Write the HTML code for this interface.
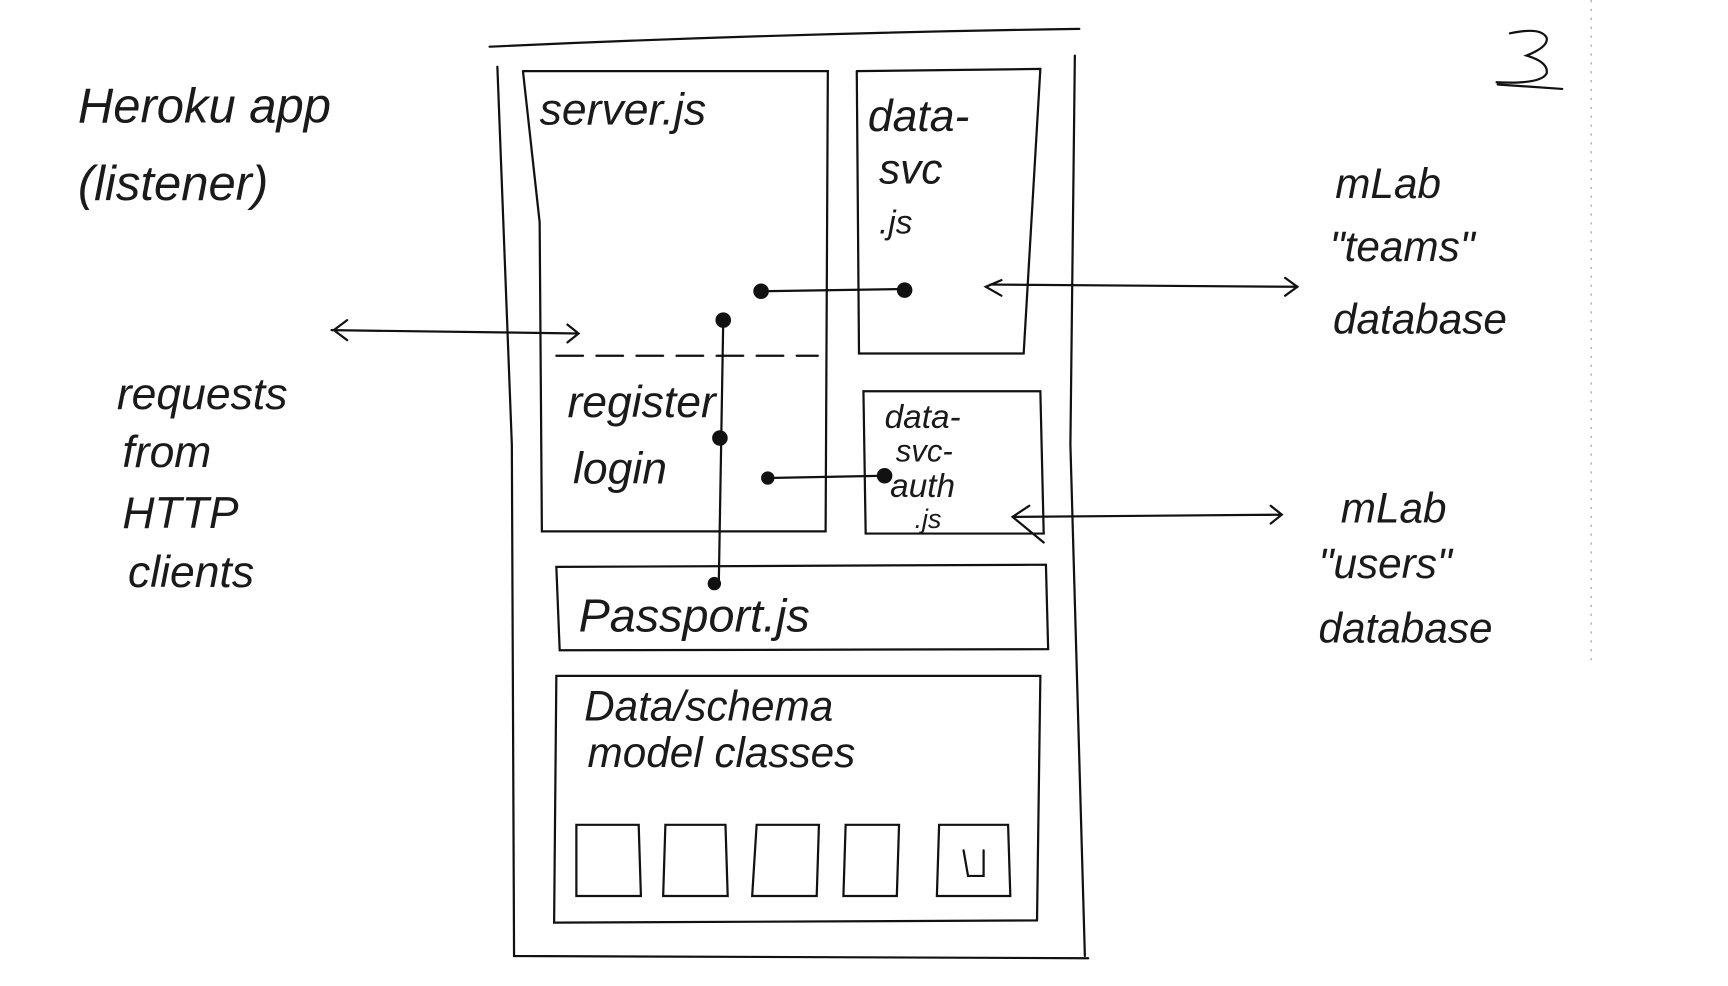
<!DOCTYPE html>
<html><head><meta charset="utf-8"><style>
html,body{margin:0;padding:0;background:#fff;}
svg{display:block}
text{font-family:"Liberation Sans",sans-serif;fill:#1a1a1a;font-weight:normal}
</style></head><body>
<svg width="1728" height="986" viewBox="0 0 1553 887" preserveAspectRatio="none" xmlns="http://www.w3.org/2000/svg">
<g fill="none" stroke="#111" stroke-width="2" stroke-linecap="round">
<path d="M440 42 Q700 30 970 26"/>
<path d="M447 60 L460 400 L462 860 L978 862"/>
<path d="M966 50 L962 400 L975 860"/>
<path d="M470 64 L744 64 L742 478 L487 478 L485 200 L470 64"/>
<path d="M770 64 L935 62 L920 318 L772 318 L770 64"/>
<path d="M776 352 L935 352 L938 480 L778 480 Z"/>
<path d="M500 510 L940 508 L942 584 L503 585 Z"/>
<path d="M500 608 L935 608 L932 828 L498 830 Z"/>
<path d="M500 320 L735 320" stroke-dasharray="24 12"/>
<path d="M518 742 L574 742 L576 806 L518 806 Z"/>
<path d="M598 742 L652 742 L654 806 L596 806 Z"/>
<path d="M680 742 L736 742 L734 806 L676 806 Z"/>
<path d="M760 742 L808 742 L806 806 L758 806 Z"/>
<path d="M844 742 L906 742 L908 806 L842 806 Z"/>
<path d="M866 765 L870 788 L884 788 L884 765"/>
<path d="M684 262 L812 260"/>
<path d="M650 288 L646 525"/>
<path d="M690 430 L795 428"/>
<path d="M890 256 L1165 258 M1155 250 L1166 258 L1155 266"/>
<path d="M900 252 L886 258 L900 266"/>
<path d="M298 297 L520 300 M300 297 L312 288 M300 297 L312 306 M510 292 L520 300 L510 308"/>
<path d="M910 465 L1152 463 M1142 455 L1152 463 L1142 471 M925 455 L910 465 L938 488"/>
<path d="M1357 30 Q1385 24 1390 34 Q1392 42 1372 50 Q1392 56 1390 66 Q1385 76 1345 74 M1346 76 L1404 80"/>
</g>
<path d="M1430 0 L1430 600" stroke="#999" stroke-width="1" stroke-dasharray="2 6"/>
<g fill="#111">
<circle cx="684" cy="262" r="7"/><circle cx="813" cy="261" r="7"/>
<circle cx="650" cy="288" r="7"/><circle cx="647" cy="394" r="7"/>
<circle cx="690" cy="430" r="6"/><circle cx="795" cy="428" r="7"/>
<circle cx="642" cy="525" r="6"/>
</g>
<g font-style="italic">
<text x="70" y="110" font-size="44">Heroku app</text>
<text x="70" y="180" font-size="44">(listener)</text>
<text x="485" y="112" font-size="40">server.js</text>
<text x="780" y="118" font-size="40">data-</text>
<text x="790" y="165" font-size="38">svc</text>
<text x="790" y="210" font-size="30">.js</text>
<text x="1200" y="178" font-size="38">mLab</text>
<text x="1195" y="235" font-size="38">"teams"</text>
<text x="1198" y="300" font-size="38">database</text>
<text x="105" y="368" font-size="40">requests</text>
<text x="110" y="420" font-size="40">from</text>
<text x="110" y="475" font-size="40">HTTP</text>
<text x="115" y="528" font-size="40">clients</text>
<text x="510" y="375" font-size="40">register</text>
<text x="515" y="435" font-size="40">login</text>
<text x="795" y="385" font-size="30">data-</text>
<text x="805" y="415" font-size="28">svc-</text>
<text x="800" y="447" font-size="30">auth</text>
<text x="822" y="475" font-size="24">.js</text>
<text x="1205" y="470" font-size="38">mLab</text>
<text x="1185" y="520" font-size="38">"users"</text>
<text x="1185" y="578" font-size="38">database</text>
<text x="520" y="568" font-size="42">Passport.js</text>
<text x="525" y="648" font-size="38">Data/schema</text>
<text x="528" y="690" font-size="38">model classes</text>
</g>
</svg>
</body></html>
